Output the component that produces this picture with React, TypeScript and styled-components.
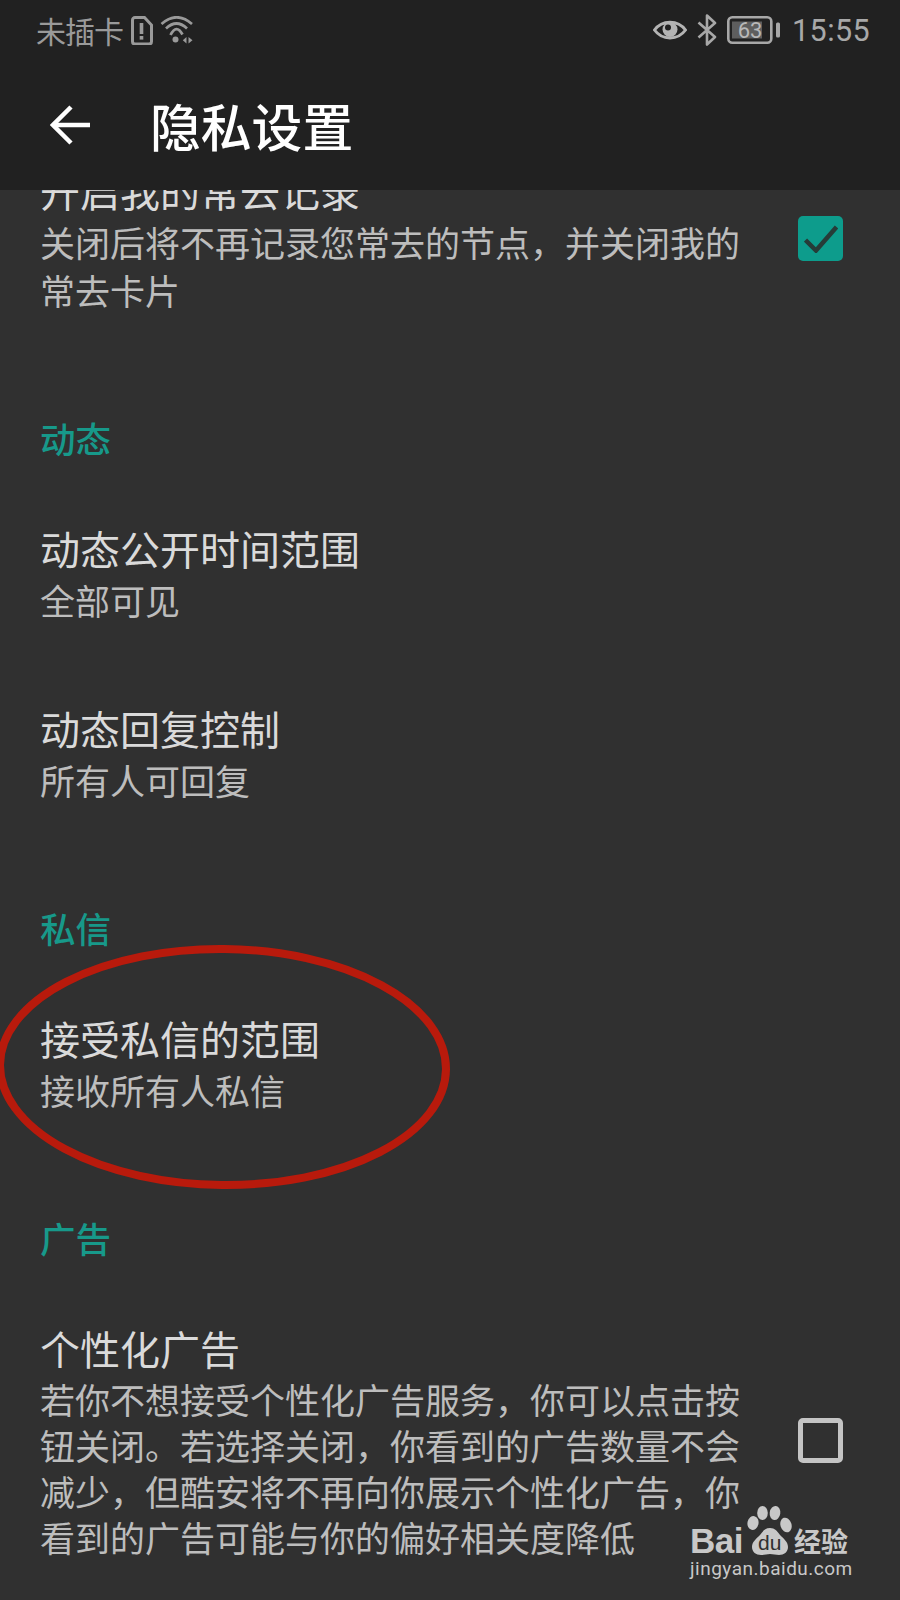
import React from "react";
import styled, { createGlobalStyle } from "styled-components";

const Global = createGlobalStyle`
  html, body { margin: 0; padding: 0; background: #303030; }
  body { font-family: "Noto Sans CJK SC", "Noto Sans", sans-serif; }
`;
const Page = styled.div`
  position: relative; width: 900px; height: 1600px; overflow: hidden;
  background: #303030; display: flex; flex-direction: column;
`;
const Header = styled.header`
  height: 190px; flex: none; background: #212121; display: flex; flex-direction: column;
  position: relative; z-index: 1;
`;
const StatusBar = styled.div`
  height: 60px; flex: none; display: flex; align-items: center; justify-content: space-between;
  padding: 0 30px 0 36px; color: #9a9a9a;
`;
const StatusGroup = styled.div`display: flex; align-items: center;`;
const Carrier = styled.span`font-size: 30px; line-height: 60px; letter-spacing: -1px;`;
const Clock = styled.span`font-family: "Roboto", sans-serif; font-size: 30.5px; letter-spacing: 0.4px; margin-left: 12px; color: #a8a8a8;`;
const Toolbar = styled.div`flex: 1; display: flex; align-items: center; padding-left: 50px;`;
const Title = styled.h1`
  margin: 0 0 0 60px; font-size: 50.8px; line-height: 64px; font-weight: 500; color: #fff;
`;
const Scroll = styled.main`flex: 1; overflow: hidden;`;
const ScrollInner = styled.div`margin-top: -64px; padding: 0 57px 0 40px;`;
const Section = styled.section`padding-top: 60px;`;
const SectionLabel = styled.h2`
  margin: 0 0 22px; font-size: 35.5px; line-height: 48px; font-weight: 500; color: #17998a;
`;
const Row = styled.div`display: flex; align-items: center; justify-content: space-between; padding: 40px 0;`;
const RowText = styled.div`width: 710px;`;
const RowTitle = styled.div`font-size: 40px; line-height: 48px; margin-bottom: 4px; color: #dadada;`;
const RowSub = styled.div<{ $tight?: boolean }>`
  font-size: 35px; line-height: ${(p) => (p.$tight ? "46px" : "48px")}; color: #bdbdbd;
`;
const Box = styled.div<{ $checked?: boolean }>`
  width: 45px; height: 45px; box-sizing: border-box; border-radius: 5px; flex: none; margin-bottom: 3px;
  display: flex; align-items: center; justify-content: center;
  background: ${(p) => (p.$checked ? "#0d9c8c" : "transparent")};
  border: ${(p) => (p.$checked ? "none" : "5px solid #c4c4c4")};
`;
const Ellipse = styled.svg`position: absolute; left: 0; top: 930px; pointer-events: none;`;
const Watermark = styled.div`
  position: absolute; left: 690px; top: 1504px; width: 170px; color: #c8c8c8;
`;
const LogoLine = styled.div`display: flex; align-items: flex-end; height: 52px;`;
const Bai = styled.span`font-family: "Liberation Sans", sans-serif; font-weight: 700; font-size: 35px; line-height: 30px; letter-spacing: -0.5px;`;
const Paw = styled.div`position: relative; width: 47px; height: 52px; margin-left: 2px; flex: none;`;
const Du = styled.span`
  position: absolute; left: 13px; top: 29px; font-family: "Liberation Sans", sans-serif;
  font-size: 21px; line-height: 20px; color: #303030;
`;
const Jy = styled.span`font-size: 27px; line-height: 30px; font-weight: 700; margin-left: 2px; white-space: nowrap;`;
const Url = styled.div`font-family: "Roboto", sans-serif; font-size: 19px; line-height: 26px; letter-spacing: 0.5px; white-space: nowrap;`;

const SimIcon = () => (
  <svg width="22" height="29" viewBox="0 0 22 29" style={{ marginLeft: 8 }}>
    <path d="M4 1.500h9.500l7 7.500v16.500a2.500 2.500 0 0 1-2.500 2.500H4a2.500 2.500 0 0 1-2.500-2.500V4A2.500 2.500 0 0 1 4 1.500z" fill="none" stroke="#9a9a9a" strokeWidth="3" />
    <rect x="8.700" y="7" width="3.600" height="11" fill="#9a9a9a" />
    <rect x="8.700" y="20" width="3.600" height="3.600" fill="#9a9a9a" />
  </svg>
);
const WifiIcon = () => (
  <svg width="34" height="28" viewBox="0 0 34 28" style={{ marginLeft: 7 }} fill="none" stroke="#9a9a9a" strokeWidth="2.700">
    <path d="M1.500 8Q16.500-5.400 32 8" />
    <path d="M6 12.500Q16.500 2.500 27 12.500" />
    <path d="M10.500 19Q16.500 7.500 22.500 18.500" />
    <circle cx="15.500" cy="23.500" r="3" fill="#9a9a9a" stroke="none" />
    <path d="M26.500 21v6.500l-3.700-3.200zM28.500 21v6.500l4-3.200z" fill="#9a9a9a" stroke="none" />
  </svg>
);
const EyeIcon = () => (
  <svg width="34" height="24" viewBox="0 0 34 24">
    <path d="M1.500 12C9 1.500 25 1.500 32.500 12 25 22.500 9 22.500 1.500 12z" fill="none" stroke="#b4b4b4" strokeWidth="3" />
    <circle cx="17" cy="11.500" r="7.500" fill="#b4b4b4" />
    <circle cx="15" cy="9.500" r="3" fill="#212121" />
  </svg>
);
const BtIcon = () => (
  <svg width="20" height="32" viewBox="0 0 20 32" style={{ marginLeft: 10 }} fill="none" stroke="#a8a8a8" strokeWidth="2.600">
    <path d="M1.500 8.500L18 23l-8 7.500V1.500l8 7.500L1.500 23.500" strokeLinejoin="round" />
  </svg>
);
const BatteryIcon = () => (
  <svg width="53" height="28" viewBox="0 0 53 28" style={{ marginLeft: 10 }}>
    <rect x="1.300" y="1.300" width="43" height="25.400" rx="4" fill="none" stroke="#a8a8a8" strokeWidth="2.600" />
    <rect x="5" y="5.500" width="30" height="17" fill="#5e5e5e" />
    <rect x="49" y="6.500" width="4" height="15" rx="1.500" fill="#a8a8a8" />
    <text x="23" y="22" textAnchor="middle" fontFamily="Roboto, sans-serif" fontSize="22" fill="#b8b8b8">63</text>
  </svg>
);
const BackIcon = () => (
  <svg width="40" height="40" viewBox="0 0 40 40" fill="none" stroke="#fff" strokeWidth="4.500">
    <path d="M40 20H3" />
    <path d="M21 2L3 20l18 18" />
  </svg>
);
const CheckIcon = () => (
  <svg width="34" height="28" viewBox="0 0 34 28" fill="none" stroke="#263c38" strokeWidth="4.500">
    <path d="M1.500 15L12 25.500 32.500 2" />
  </svg>
);
const PawIcon = () => (
  <svg width="47" height="52" viewBox="0 0 47 52" fill="#c8c8c8">
    <ellipse cx="8" cy="19" rx="5.500" ry="7" transform="rotate(12 8 19)" />
    <ellipse cx="17.500" cy="9" rx="5.300" ry="7" />
    <ellipse cx="30" cy="9" rx="5.300" ry="7" transform="rotate(8 30 9)" />
    <ellipse cx="41" cy="21" rx="5.500" ry="7.500" transform="rotate(-18 41 21)" />
    <path d="M25 24c5 0 7 3 10 7 4 4 8 7 8 12 0 5-4 8-9 8-3 0-6-1-9-1s-6 1-9 1c-5 0-9-3-9-8 0-5 4-8 8-12 3-4 5-7 10-7z" />
  </svg>
);

export default function App() {
  return (
    <Page>
      <Global />
      <Header>
        <StatusBar>
          <StatusGroup>
            <Carrier>未插卡</Carrier>
            <SimIcon />
            <WifiIcon />
          </StatusGroup>
          <StatusGroup>
            <EyeIcon />
            <BtIcon />
            <BatteryIcon />
            <Clock>15:55</Clock>
          </StatusGroup>
        </StatusBar>
        <Toolbar>
          <BackIcon />
          <Title>隐私设置</Title>
        </Toolbar>
      </Header>
      <Scroll>
        <ScrollInner>
          <Row>
            <RowText>
              <RowTitle>开启我的常去记录</RowTitle>
              <RowSub>关闭后将不再记录您常去的节点，并关闭我的常去卡片</RowSub>
            </RowText>
            <Box $checked><CheckIcon /></Box>
          </Row>
          <Section>
            <SectionLabel>动态</SectionLabel>
            <Row>
              <RowText>
                <RowTitle>动态公开时间范围</RowTitle>
                <RowSub>全部可见</RowSub>
              </RowText>
            </Row>
            <Row>
              <RowText>
                <RowTitle>动态回复控制</RowTitle>
                <RowSub>所有人可回复</RowSub>
              </RowText>
            </Row>
          </Section>
          <Section>
            <SectionLabel>私信</SectionLabel>
            <Row>
              <RowText>
                <RowTitle>接受私信的范围</RowTitle>
                <RowSub>接收所有人私信</RowSub>
              </RowText>
            </Row>
          </Section>
          <Section>
            <SectionLabel>广告</SectionLabel>
            <Row>
              <RowText>
                <RowTitle>个性化广告</RowTitle>
                <RowSub $tight>若你不想接受个性化广告服务，你可以点击按钮关闭。若选择关闭，你看到的广告数量不会减少，但酷安将不再向你展示个性化广告，你看到的广告可能与你的偏好相关度降低</RowSub>
              </RowText>
              <Box />
            </Row>
          </Section>
        </ScrollInner>
      </Scroll>
      <Ellipse width="470" height="270" viewBox="0 0 470 270">
        <ellipse cx="223" cy="137" rx="223" ry="118" fill="none" stroke="#b81a0c" strokeWidth="8" transform="rotate(0.6 223 137)" />
      </Ellipse>
      <Watermark>
        <LogoLine>
          <Bai>Bai</Bai>
          <Paw>
            <PawIcon />
            <Du>du</Du>
          </Paw>
          <Jy>经验</Jy>
        </LogoLine>
        <Url>jingyan.baidu.com</Url>
      </Watermark>
    </Page>
  );
}
